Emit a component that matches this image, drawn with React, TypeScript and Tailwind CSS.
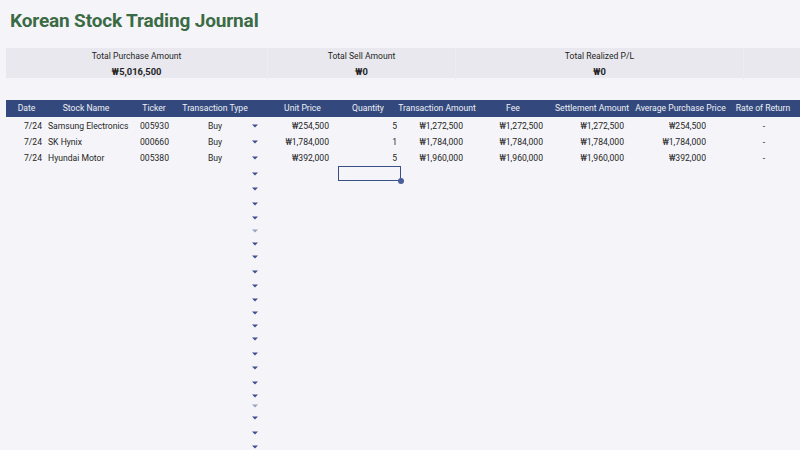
import React from "react";

const font = { fontFamily: "Roboto, 'Noto Sans', sans-serif" };

const COLS =
  "grid grid-cols-[40px_84px_54px_62px_16px_71px_68px_66px_80px_81px_82px_90px]";

const headers: { label: string; cls: string }[] = [
  { label: "Date", cls: "pl-[1px]" },
  { label: "Stock Name", cls: "pr-[4px]" },
  { label: "Ticker", cls: "pr-[6px]" },
  { label: "Transaction Type", cls: "" },
  { label: "", cls: "" },
  { label: "Unit Price", cls: "pl-[10px]" },
  { label: "Quantity", cls: "pl-[2px]" },
  { label: "Transaction Amount", cls: "pl-[6px]" },
  { label: "Fee", cls: "pl-[12px]" },
  { label: "Settlement Amount", cls: "pl-[9px]" },
  { label: "Average Purchase Price", cls: "pl-[23px]" },
  { label: "Rate of Return", cls: "pl-[16px]" },
];

const rows = [
  ["7/24", "Samsung Electronics", "005930", "Buy", "₩254,500", "5", "₩1,272,500", "₩1,272,500", "₩1,272,500", "₩254,500", "-"],
  ["7/24", "SK Hynix", "000660", "Buy", "₩1,784,000", "1", "₩1,784,000", "₩1,784,000", "₩1,784,000", "₩1,784,000", "-"],
  ["7/24", "Hyundai Motor", "005380", "Buy", "₩392,000", "5", "₩1,960,000", "₩1,960,000", "₩1,960,000", "₩392,000", "-"],
];

const emptyRows: { h: string; faint?: boolean }[] = [
  { h: "h-[15px]" },
  { h: "h-[15px]" },
  { h: "h-[15px]" },
  { h: "h-[14px]" },
  { h: "h-[12px]", faint: true },
  { h: "h-[13px]" },
  { h: "h-[14px]" },
  { h: "h-[15px]" },
  { h: "h-[14px]" },
  { h: "h-[14px]" },
  { h: "h-[12px]" },
  { h: "h-[13px]" },
  { h: "h-[14px]" },
  { h: "h-[15px]" },
  { h: "h-[14px]" },
  { h: "h-[15px]" },
  { h: "h-[11px]" },
  { h: "h-[10px]", faint: true },
  { h: "h-[14px]" },
  { h: "h-[15px]" },
  { h: "h-[14px]" },
];

function Arrow({ faint }: { faint?: boolean }) {
  return (
    <svg
      width="6"
      height="4"
      viewBox="0 0 6 4"
      className={faint ? "opacity-50" : ""}
    >
      <path d="M0 0.5 L6 0.5 L3 3.5 Z" fill="#3e4f8e" />
    </svg>
  );
}

export default function App() {
  return (
    <div
      className="w-[800px] h-[450px] overflow-hidden bg-[#f5f5f9] text-[#1f1f1f]"
      style={font}
    >
      <div className="pl-[10px] pt-[8px] h-[48px]">
        <h1 className="text-[19px] leading-[26px] font-bold text-[#3b6b45] tracking-[-0.15px]">
          Korean Stock Trading Journal
        </h1>
      </div>

      <div className="ml-[6px] h-[30px] bg-[#e8e8ee] grid grid-cols-[262px_188px_288px_56px] text-[8.6px]">
        {[
          ["Total Purchase Amount", "₩5,016,500"],
          ["Total Sell Amount", "₩0"],
          ["Total Realized P/L", "₩0"],
          ["", ""],
        ].map(([l, v], i) => (
          <div
            key={i}
            className="flex flex-col items-center pt-[2px] border-r border-[#ececf2] last:border-r-0"
          >
            <div className="leading-[13px]">{l}</div>
            <div className="leading-[17px] text-[9.4px] font-bold">{v}</div>
          </div>
        ))}
      </div>

      <div className="h-[22px]" />

      <div className={`${COLS} ml-[6px] h-[17px] bg-[#33497d] text-[#eef0f6] text-[8.6px] items-center`}>
        {headers.map((h, i) => (
          <div
            key={i}
            className={`flex justify-center whitespace-nowrap ${h.cls}`}
          >
            {h.label}
          </div>
        ))}
      </div>

      <div className="h-[1px]" />

      {rows.map((r, i) => (
        <div
          key={i}
          className={`${COLS} ml-[6px] h-[16px] items-center text-[8.6px] text-[#262626]`}
        >
          <div className="text-right pr-[4px]">{r[0]}</div>
          <div className="pl-[2px] whitespace-nowrap">{r[1]}</div>
          <div className="pl-[10px]">{r[2]}</div>
          <div className="text-center">{r[3]}</div>
          <div className="flex justify-center pl-[2px]">
            <Arrow />
          </div>
          <div className="text-right pr-[4px]">{r[4]}</div>
          <div className="text-right pr-[4px]">{r[5]}</div>
          <div className="text-right pr-[4px]">{r[6]}</div>
          <div className="text-right pr-[4px]">{r[7]}</div>
          <div className="text-right pr-[4px]">{r[8]}</div>
          <div className="text-right pr-[4px]">{r[9]}</div>
          <div className="text-center pl-[18px]">{r[10]}</div>
        </div>
      ))}

      {emptyRows.map((er, i) => (
        <div key={i} className={`${COLS} ml-[6px] ${er.h} items-center`}>
          <div />
          <div />
          <div />
          <div />
          <div className="flex justify-center pl-[2px]">
            <Arrow faint={er.faint} />
          </div>
          <div />
          {i === 0 ? (
            <div className="relative h-[15px] flex">
              <div className="ml-[5px] flex-1 border border-[#3a4f86]" />
              <div className="absolute right-[-3px] bottom-[-3px] w-[6px] h-[6px] rounded-full bg-[#4a5e9c]" />
            </div>
          ) : (
            <div />
          )}
          <div />
          <div />
          <div />
          <div />
          <div />
        </div>
      ))}
    </div>
  );
}
